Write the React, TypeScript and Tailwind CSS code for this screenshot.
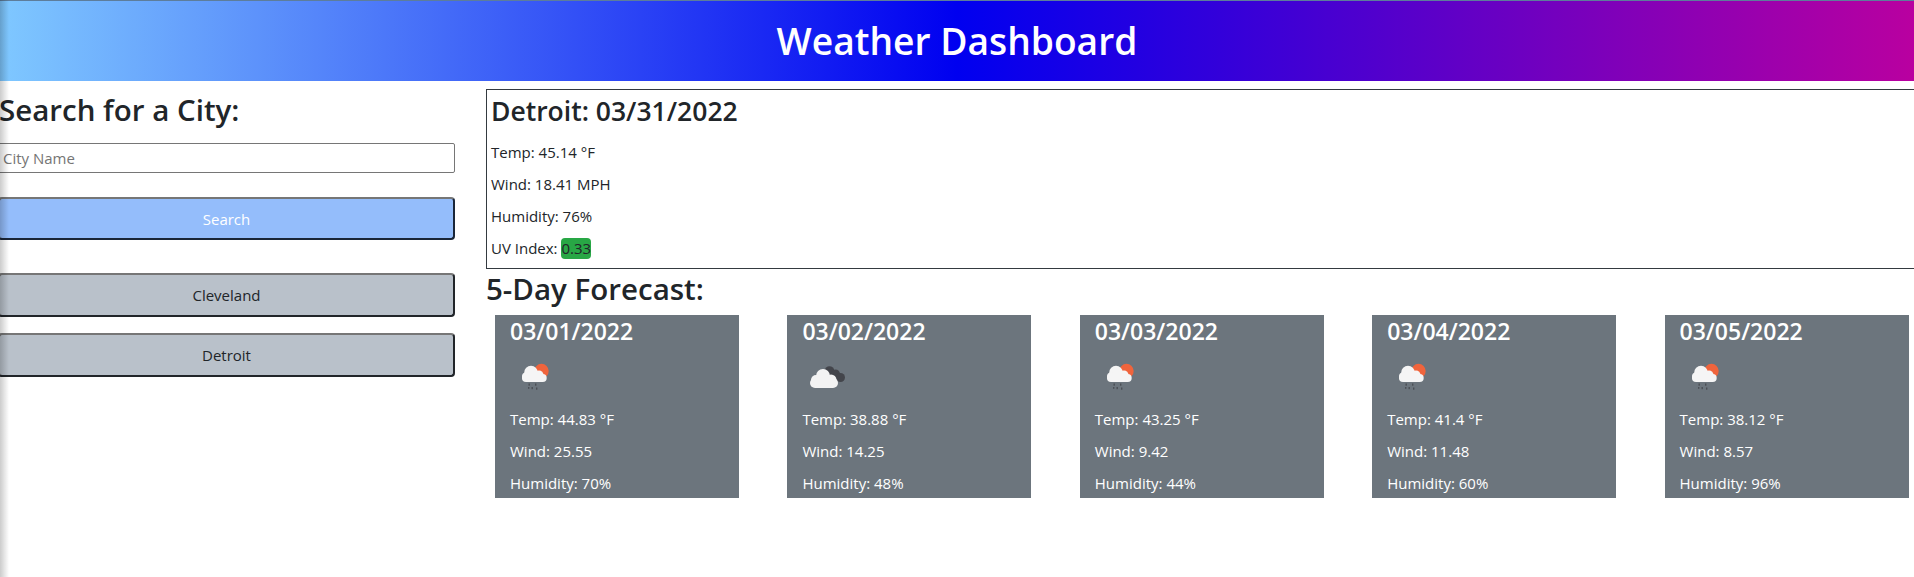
const font = "font-['Open_Sans','Noto_Sans',sans-serif]";

function SunRain() {
  return (
    <svg viewBox="0 0 50 50" className="w-[50px] h-[50px] block" aria-hidden="true">
      <circle cx="31.500" cy="20" r="7.200" fill="#f0643c" />
      <g fill="#f5f5f5">
        <rect x="12" y="23" width="24.700" height="8" rx="4" />
        <circle cx="21" cy="21.500" r="6.800" />
        <circle cx="29" cy="24" r="4.500" />
        <circle cx="16" cy="25.500" r="4" />
      </g>
      <g fill="#4b4f55">
        <rect x="18.500" y="32.500" width="1.400" height="2.200" />
        <rect x="25" y="32.500" width="1.400" height="2.200" />
        <rect x="21.500" y="36" width="1.400" height="2.200" />
        <rect x="26" y="36.500" width="1.400" height="2.200" />
        <rect x="18" y="36" width="1.400" height="1.800" />
      </g>
    </svg>
  );
}

function DarkCloud() {
  return (
    <svg viewBox="0 0 50 50" className="w-[50px] h-[50px] block" aria-hidden="true">
      <g fill="#43454b">
        <circle cx="27.500" cy="20" r="4.800" />
        <circle cx="33.500" cy="23" r="4.500" />
        <circle cx="38.500" cy="26.500" r="4.500" />
      </g>
      <g fill="#f3f3f3">
        <rect x="8" y="27" width="28" height="10" rx="5" />
        <circle cx="21" cy="25" r="7" />
        <circle cx="29" cy="29" r="5.500" />
        <circle cx="14" cy="29" r="5" />
      </g>
    </svg>
  );
}

const days = [
  { d: "03/01/2022", t: "44.83", w: "25.55", h: "70", i: "rain" },
  { d: "03/02/2022", t: "38.88", w: "14.25", h: "48", i: "cloud" },
  { d: "03/03/2022", t: "43.25", w: "9.42", h: "44", i: "rain" },
  { d: "03/04/2022", t: "41.4", w: "11.48", h: "60", i: "rain" },
  { d: "03/05/2022", t: "38.12", w: "8.57", h: "96", i: "rain" },
];

const greyBtn =
  "block w-full h-[44px] bg-[#b9c1ca] rounded-[4px] border-2 border-t-[#767676] border-l-[#767676] border-r-[#212529] border-b-[#212529]";

export default function App() {
  return (
    <div className={`${font} relative w-[1914px] h-[577px] overflow-hidden bg-white text-[#212529] text-[15px] leading-[24px]`}>
      <div className="absolute left-0 top-0 bottom-0 w-[9px] bg-gradient-to-r from-[#00000033] to-transparent z-10" />
      <header className="h-[81px] border-t border-[#5d7d9b] flex items-center justify-center bg-[linear-gradient(to_right,#7fc8ff_0%,#0000f0_50%,#b900a0_100%)]">
        <h1 className="text-[37.200px] font-semibold text-white leading-none">Weather Dashboard</h1>
      </header>
      <div className="flex gap-[31px] pt-[8px]">
        <aside className="w-[457px] -ml-[2px] shrink-0">
          <h2 className="text-[29.500px] font-semibold leading-[42px] ml-[1px] whitespace-nowrap">Search for a City:</h2>
          <input placeholder="City Name" className="block mt-[12px] w-full h-[30px] border border-[#767676] rounded-[2px] pl-[4px] text-[15px] placeholder:text-[#757575] outline-none" />
          <button className="block mt-[24px] w-full h-[43px] bg-[#94bdfb] text-white rounded-[4px] border-2 border-t-[#767676] border-l-[#767676] border-r-[#1a2638] border-b-[#1a2638]">Search</button>
          <button className={`${greyBtn} mt-[33px]`}>Cleveland</button>
          <button className={`${greyBtn} mt-[16px]`}>Detroit</button>
        </aside>
        <main className="flex-1 min-w-0">
          <section className="w-[1600px] h-[180px] border border-[#343a40] pl-[4px]">
            <h2 className="text-[26.500px] font-semibold leading-[36px] mt-[3px] mb-[7px] whitespace-nowrap">Detroit: 03/31/2022</h2>
            <p className="h-[32px] leading-[32px]">Temp: 45.14 °F</p>
            <p className="h-[32px] leading-[32px]">Wind: 18.41 MPH</p>
            <p className="h-[32px] leading-[32px]">Humidity: 76%</p>
            <p className="h-[32px] leading-[32px]">UV Index: <span className="inline-block leading-[21px] bg-[#28a745] rounded-[4px] text-[#212529]">0.33</span></p>
          </section>
          <h2 className="text-[29.500px] font-semibold leading-[42px] -mt-[1px] whitespace-nowrap">5-Day Forecast:</h2>
          <div className="flex gap-[48.400px] ml-[9px] mt-[5px] w-[1500px]">
            {days.map((x) => (
              <div key={x.d} className="w-[244px] h-[183px] shrink-0 bg-[#6c757d] text-white pl-[15px]">
                <h3 className="text-[23px] font-semibold leading-[32px]">{x.d}</h3>
                <div className="mt-[4px] h-[50px]">{x.i === "rain" ? <SunRain /> : <DarkCloud />}</div>
                <p className="h-[32px] leading-[32px] mt-[2px]">Temp: {x.t} °F</p>
                <p className="h-[32px] leading-[32px]">Wind: {x.w}</p>
                <p className="h-[31px] leading-[32px]">Humidity: {x.h}%</p>
              </div>
            ))}
          </div>
        </main>
      </div>
    </div>
  );
}
